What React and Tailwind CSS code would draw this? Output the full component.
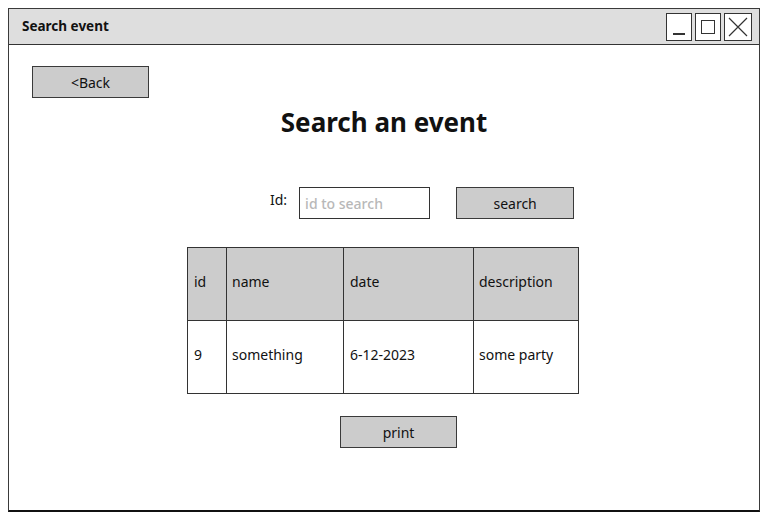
import React from "react";

const font = { fontFamily: '"Noto Sans", "DejaVu Sans", sans-serif' };

function Btn({ children, className = "" }) {
  return (
    <div
      className={
        "flex items-center justify-center h-[32px] w-[117px] bg-[#cccccc] border-[1.5px] border-[#3a3a3a] text-[14px] text-[#111] " +
        className
      }
    >
      {children}
    </div>
  );
}

export default function App() {
  return (
    <div className="w-[768px] h-[521px] bg-white pt-[8px] pl-[8px]" style={font}>
      <div className="w-[752px] h-[504px] border-[1.5px] border-[#3a3a3a] border-b-[2.5px] border-b-[#111] flex flex-col bg-white">
        {/* Title bar */}
        <div className="h-[36px] bg-[#dedede] border-b-[1.5px] border-[#333] flex items-center pl-[13px] pr-[7px] shrink-0">
          <div className="text-[13.5px] font-bold text-[#111] flex-1">Search event</div>
          <div className="flex gap-[3px] items-center">
            <div className="w-[26px] h-[28px] bg-white border border-[#333] flex items-end justify-center pb-[5px]">
              <div className="w-[12px] h-[1.5px] bg-[#333]" />
            </div>
            <div className="w-[26px] h-[28px] bg-white border border-[#333] flex items-center justify-center">
              <div className="w-[14px] h-[14px] border-[1.5px] border-[#333]" />
            </div>
            <div className="w-[28px] h-[28px] bg-white border border-[#333] flex items-center justify-center">
              <svg width="22" height="22" viewBox="0 0 22 22">
                <path d="M2 2 L20 20 M20 2 L2 20" stroke="#333" strokeWidth="1.2" fill="none" />
              </svg>
            </div>
          </div>
        </div>

        {/* Content */}
        <div className="flex flex-col">
          <Btn className="mt-[21px] ml-[23px]">&lt;Back</Btn>

          <h1 className="mt-[8px] h-[32px] leading-[32px] text-center text-[26px] font-bold text-[#111]">
            Search an event
          </h1>

          <div className="mt-[49px] ml-[261px] flex items-start">
            <span className="text-[14px] mt-[2px] text-[#111]">Id:</span>
            <div className="ml-[12px] w-[131px] h-[32px] border-[1.5px] border-[#333] flex items-center px-[5px] text-[14px] font-medium text-[#b8b8b8]">
              id to search
            </div>
            <Btn className="ml-[26px] w-[118px]">search</Btn>
          </div>

          <div className="mt-[28px] ml-[178px] w-[392px] border-[1.5px] border-[#333] text-[14px] text-[#111]">
            <div className="flex h-[73px] bg-[#cccccc] border-b-[1.5px] border-[#333] pb-[5px]">
              <div className="w-[39px] border-r-[1.5px] border-[#333] -mb-[5px] pb-[5px] flex items-center pl-[6px]">id</div>
              <div className="w-[117px] border-r-[1.5px] border-[#333] -mb-[5px] pb-[5px] flex items-center pl-[5px]">name</div>
              <div className="w-[130px] border-r-[1.5px] border-[#333] -mb-[5px] pb-[5px] flex items-center pl-[6px]">date</div>
              <div className="flex-1 flex items-center pl-[5px]">description</div>
            </div>
            <div className="flex h-[72px] bg-white">
              <div className="w-[39px] border-r-[1.5px] border-[#333] pb-[6px] flex items-center pl-[6px]">9</div>
              <div className="w-[117px] border-r-[1.5px] border-[#333] pb-[6px] flex items-center pl-[5px]">something</div>
              <div className="w-[130px] border-r-[1.5px] border-[#333] pb-[6px] flex items-center pl-[6px]">6-12-2023</div>
              <div className="flex-1 flex items-center pb-[6px] pl-[5px]">some party</div>
            </div>
          </div>

          <Btn className="mt-[22px] ml-[331px]">print</Btn>
        </div>
      </div>
    </div>
  );
}
